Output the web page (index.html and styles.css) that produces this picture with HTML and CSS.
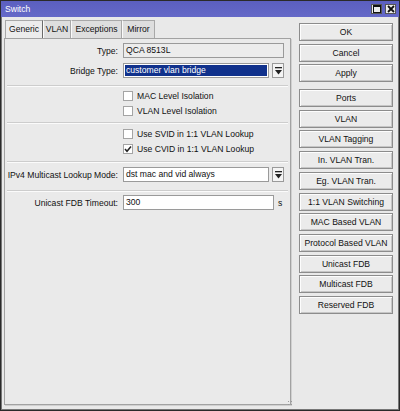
FILE: index.html
```html
<!DOCTYPE html>
<html>
<head>
<meta charset="utf-8">
<link rel="stylesheet" href="styles.css">
</head>
<body>
<div class="window">
  <div class="titlebar">
    <span class="title">Switch</span>
    <div class="tb-btns">
      <span class="tb-btn"><svg width="8" height="8" viewBox="0 0 8 8"><rect x="0.5" y="0.5" width="7" height="7" fill="none" stroke="#111" stroke-width="1"/><rect x="0" y="0" width="8" height="2" fill="#111"/></svg></span>
      <span class="tb-btn"><svg width="8" height="8" viewBox="0 0 8 8"><path d="M1 1 L7 7 M7 1 L1 7" stroke="#111" stroke-width="1.8"/></svg></span>
    </div>
  </div>
  <div class="body">
    <div class="left">
      <div class="tabs">
        <div class="tab active t-generic">Generic</div>
        <div class="tab t-vlan">VLAN</div>
        <div class="tab t-exc">Exceptions</div>
        <div class="tab t-mirror">Mirror</div>
      </div>
      <div class="panel">
        <div class="row r-type">
          <label class="lbl">Type:</label>
          <div class="field disabled">QCA 8513L</div>
        </div>
        <div class="row r-bridge">
          <label class="lbl">Bridge Type:</label>
          <div class="combo">
            <div class="field"><span class="sel">customer vlan bridge</span></div>
            <span class="dd"><svg width="7" height="8" viewBox="0 0 7 8"><rect x="0" y="0" width="7" height="1.3" fill="#222"/><path d="M0 3 L7 3 L3.5 7.5 Z" fill="#222"/></svg></span>
          </div>
        </div>
        <div class="sep s1"></div>
        <div class="chk c1"><span class="box"></span><span>MAC Level Isolation</span></div>
        <div class="chk"><span class="box"></span><span>VLAN Level Isolation</span></div>
        <div class="sep s2"></div>
        <div class="chk c3"><span class="box"></span><span>Use SVID in 1:1 VLAN Lookup</span></div>
        <div class="chk"><span class="box"><svg width="8" height="8" viewBox="0 0 8 8"><path d="M1 4 L3 6.3 L7 1.5" fill="none" stroke="#222" stroke-width="1.5"/></svg></span><span>Use CVID in 1:1 VLAN Lookup</span></div>
        <div class="sep s3"></div>
        <div class="row r-ipv4">
          <label class="lbl">IPv4 Multicast Lookup Mode:</label>
          <div class="combo">
            <div class="field white">dst mac and vid always</div>
            <span class="dd"><svg width="7" height="8" viewBox="0 0 7 8"><rect x="0" y="0" width="7" height="1.3" fill="#222"/><path d="M0 3 L7 3 L3.5 7.5 Z" fill="#222"/></svg></span>
          </div>
        </div>
        <div class="sep s4"></div>
        <div class="row r-fdb">
          <label class="lbl">Unicast FDB Timeout:</label>
          <div class="combo">
            <div class="field white">300</div>
            <span class="unit">s</span>
          </div>
        </div>
        <span class="grip"></span>
      </div>
    </div>
    <div class="right">
      <button class="btn">OK</button>
      <button class="btn">Cancel</button>
      <button class="btn">Apply</button>
      <button class="btn first">Ports</button>
      <button class="btn">VLAN</button>
      <button class="btn">VLAN Tagging</button>
      <button class="btn">In. VLAN Tran.</button>
      <button class="btn">Eg. VLAN Tran.</button>
      <button class="btn">1:1 VLAN Switching</button>
      <button class="btn">MAC Based VLAN</button>
      <button class="btn">Protocol Based VLAN</button>
      <button class="btn">Unicast FDB</button>
      <button class="btn">Multicast FDB</button>
      <button class="btn">Reserved FDB</button>
    </div>
  </div>
</div>
</body>
</html>
```
FILE: styles.css
```css
* { box-sizing: border-box; }
html, body { margin: 0; padding: 0; background: #e9e9e9; }
body {
  font-family: "Liberation Sans", Arial, sans-serif;
  font-size: 8.6px;
  color: #111;
}
.window {
  width: 400px;
  height: 411px;
  border: 1px solid #2a2a2a;
  box-shadow: inset 1px 0 0 #777, inset -1px 0 0 #777, inset 0 -1px 0 #777;
  background: #e9e9e9;
  display: flex;
  flex-direction: column;
}
.titlebar {
  height: 16px;
  background: linear-gradient(#5b5fc0, #6569c8);
  display: flex;
  align-items: center;
  justify-content: space-between;
  padding: 0 3px 0 4px;
  flex: none;
}
.title { color: #fff; font-size: 8.6px; }
.tb-btns { display: flex; gap: 3px; }
.tb-btn {
  width: 11px;
  height: 10px;
  background: #ececec;
  border: 1px solid #555;
  display: flex;
  align-items: center;
  justify-content: center;
}
.tb-btn svg { display: block; }
.body { flex: 1; display: flex; }
.left {
  width: 290px;
  padding: 3px 0 5px 3px;
  display: flex;
  flex-direction: column;
}
.tabs { display: flex; height: 18px; padding-left: 1px; }
.tab {
  height: 18px;
  line-height: 17px;
  text-align: center;
  background: #dedede;
  border: 1px solid #a8a8a8;
  border-bottom: none;
  border-left-color: #fafafa;
}
.tab.active { background: #ececec; border-left-color: #a8a8a8; border-right-color: #6a6a6a; }
.t-generic { width: 38px; }
.t-vlan { width: 28px; }
.t-exc { width: 51px; }
.t-mirror { width: 33px; }
.panel {
  flex: 1;
  position: relative;
  border: 1px solid #a2a2a2;
  box-shadow: 1px 1px 0 #d0d0d0;
  background: #eaeaea;
  padding: 4px 6px 0 0;
  display: flex;
  flex-direction: column;
}
.row {
  display: grid;
  grid-template-columns: 113px 1fr;
  column-gap: 5px;
  align-items: center;
  height: 15px;
  margin-left: 0;
}
.r-bridge { margin-top: 5px; }
.lbl { text-align: right; white-space: nowrap; }
.field {
  height: 15px;
  border: 1px solid #9a9a9a;
  padding: 0 2px;
  line-height: 13px;
  white-space: nowrap;
  overflow: hidden;
}
.field.disabled { background: #ececec; }
.field.white { background: #fff; }
.combo { display: flex; align-items: center; gap: 3px; }
.combo .field { flex: 1; }
.r-bridge .field { background: #fff; padding: 1px; }
.sel {
  display: block;
  height: 11px;
  line-height: 11px;
  background: #10318c;
  color: #fff;
  padding-left: 1px;
}
.dd {
  width: 12px;
  height: 15px;
  border: 1px solid #9a9a9a;
  background: #f4f4f4;
  display: flex;
  align-items: center;
  justify-content: center;
}
.dd svg { display: block; }
.unit { width: 6px; text-align: left; }
.r-fdb .combo { gap: 4px; }
.sep {
  height: 2px;
  border-top: 1px solid #cdcdcd;
  border-bottom: 1px solid #fbfbfb;
  margin-left: 2px;
  margin-right: -4px;
}
.s1 { margin-top: 7px; }
.s2 { margin-top: 4px; }
.s3 { margin-top: 5px; }
.s4 { margin-top: 8px; }
.r-ipv4 { margin-top: 4px; }
.r-fdb { margin-top: 3px; }
.chk {
  height: 15px;
  display: flex;
  align-items: center;
  gap: 4px;
  padding-left: 118px;
}
.c1 { margin-top: 1px; }
.c3 { margin-top: 2px; }
.box {
  width: 10px;
  height: 10px;
  background: #fff;
  border: 1px solid #a4a4a4;
  display: flex;
  align-items: center;
  justify-content: center;
}
.box svg { display: block; }
.grip {
  position: absolute;
  right: -4px;
  bottom: -3px;
  width: 7px;
  height: 7px;
  background: radial-gradient(circle, #9a9a9a 0.8px, transparent 1px) 0 0 / 3px 3px;
}
.right {
  flex: 1;
  padding: 6px 0 0 8px;
  display: flex;
  flex-direction: column;
  gap: 2.7px;
}
.btn {
  width: 94px;
  height: 18px;
  padding: 0;
  font: inherit;
  color: #111;
  background: #ebebeb;
  border: 1px solid #8c8c8c;
  box-shadow: inset 1px 1px 0 #fdfdfd, inset -1px -1px 0 #c6c6c6;
  text-align: center;
  line-height: 16px;
}
.btn.first { margin-top: 4px; }
```
